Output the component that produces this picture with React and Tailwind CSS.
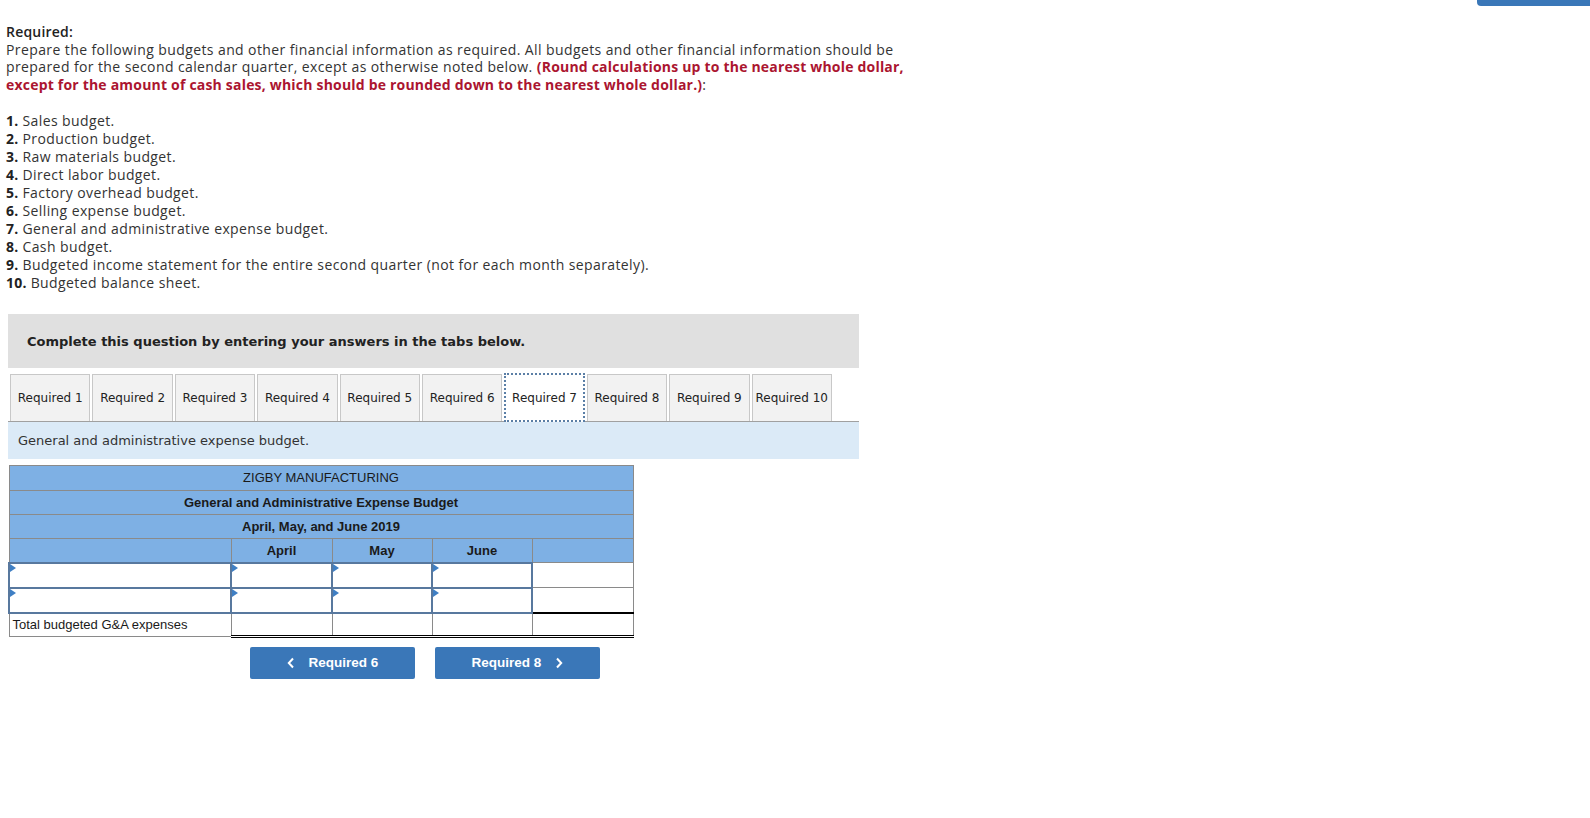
import React from "react";

const tabs = Array.from({ length: 10 }, (_, i) => `Required ${i + 1}`);
const items = [
  "Sales budget.",
  "Production budget.",
  "Raw materials budget.",
  "Direct labor budget.",
  "Factory overhead budget.",
  "Selling expense budget.",
  "General and administrative expense budget.",
  "Cash budget.",
  "Budgeted income statement for the entire second quarter (not for each month separately).",
  "Budgeted balance sheet.",
];

function Tri() {
  return (
    <span className="absolute left-0 top-0 w-0 h-0 border-t-[4px] border-b-[4px] border-l-[6px] border-t-transparent border-b-transparent border-l-[#3f7fc4]" />
  );
}

function InputCell({ w }) {
  return (
    <td className={`relative ${w} h-[25px] p-0 bg-white border-2 border-[#58789e]`}>
      <Tri />
    </td>
  );
}

function TotalCell() {
  return (
    <td
      className="border-x border-[#8a8a8a] border-t-2 border-t-black border-b-[3px] border-b-black p-0"
      style={{ borderBottomStyle: "double" }}
    />
  );
}

export default function App() {
  const body = { fontFamily: "'Open Sans', Lato, sans-serif" };
  const verdana = { fontFamily: "'DejaVu Sans', Verdana, sans-serif" };
  const arial = { fontFamily: "'Liberation Sans', Arial, sans-serif" };
  return (
    <div className="relative min-h-[818px] bg-white text-[#333]">
      <div className="absolute right-0 top-0 w-[113px] h-[6px] bg-[#3a77b8] rounded-bl-[4px]" />

      <div className="pt-[23px] pl-[6px] text-[14px] leading-[17.5px] tracking-[0.4px]" style={body}>
        <div className="font-semibold text-[#222] tracking-[0.2px]">Required:</div>
        <div>
          Prepare the following budgets and other financial information as required. All budgets and other financial information should be
          <br />
          prepared for the second calendar quarter, except as otherwise noted below.{" "}
          <span className="font-bold text-[#ab1530] tracking-[0.2px]">
            (Round calculations up to the nearest whole dollar,
            <br />
            except for the amount of cash sales, which should be rounded down to the nearest whole dollar.)
          </span>
          :
        </div>
        <div className="mt-[19px] leading-[18px]">
          {items.map((t, i) => (
            <div key={i}>
              <span className="font-bold text-[#222] tracking-[0.2px]">{i + 1}.</span> {t}
            </div>
          ))}
        </div>
      </div>

      <div className="ml-[8px] w-[851px] mt-[22px]">
        <div className="h-[54px] bg-[#e0e0e0] flex items-center pl-[19px] pt-[2px]">
          <span className="font-bold text-[13px] text-[#222]" style={verdana}>
            Complete this question by entering your answers in the tabs below.
          </span>
        </div>
        <div className="mt-[7px] flex gap-[2px] pl-[2px] border-b border-[#a0a0a0] h-[47px] items-end">
          {tabs.map((t, i) =>
            i === 6 ? (
              <div
                key={t}
                className="w-[80.4px] h-[49px] bg-white border-2 border-dotted border-[#5b7fa6] flex items-center justify-center text-[12px] text-[#222] mb-[-1px]"
                style={verdana}
              >
                {t}
              </div>
            ) : (
              <div
                key={t}
                className="w-[80.4px] h-[47px] bg-[#f2f2f2] border border-b-0 border-[#c8c8c8] flex items-center justify-center text-[12px] text-[#222]"
                style={verdana}
              >
                {t}
              </div>
            )
          )}
        </div>
        <div className="h-[37px] bg-[#dbeaf7] flex items-center pl-[10px] text-[13px] text-[#333]" style={verdana}>
          General and administrative expense budget.
        </div>
      </div>

      <div className="ml-[8px] mt-[6px]" style={arial}>
        <table className="border-collapse text-[13px] text-[#1a1a1a]">
          <tbody>
            <tr className="bg-[#7eb0e4]">
              <td colSpan={5} className="h-[25px] border border-[#8a8a8a] text-center p-0 w-[624px]">
                ZIGBY MANUFACTURING
              </td>
            </tr>
            <tr className="bg-[#7eb0e4]">
              <td colSpan={5} className="h-[24px] border border-[#8a8a8a] text-center p-0 font-bold">
                General and Administrative Expense Budget
              </td>
            </tr>
            <tr className="bg-[#7eb0e4]">
              <td colSpan={5} className="h-[24px] border border-[#8a8a8a] text-center p-0 font-bold">
                April, May, and June 2019
              </td>
            </tr>
            <tr className="bg-[#7eb0e4] font-bold">
              <td className="w-[222px] h-[24px] border border-[#8a8a8a] p-0" />
              <td className="w-[101px] border border-[#8a8a8a] text-center p-0">April</td>
              <td className="w-[100px] border border-[#8a8a8a] text-center p-0">May</td>
              <td className="w-[100px] border border-[#8a8a8a] text-center p-0">June</td>
              <td className="w-[101px] border border-[#8a8a8a] p-0" />
            </tr>
            {[0, 1].map((r) => (
              <tr key={r}>
                <InputCell w="w-[222px]" />
                <InputCell w="w-[101px]" />
                <InputCell w="w-[100px]" />
                <InputCell w="w-[100px]" />
                <td className="w-[101px] h-[25px] border border-[#8a8a8a] p-0 bg-white" />
              </tr>
            ))}
            <tr>
              <td className="h-[24px] border border-[#8a8a8a] pl-[3px] p-0 text-left">Total budgeted G&amp;A expenses</td>
              <TotalCell />
              <TotalCell />
              <TotalCell />
              <TotalCell />
            </tr>
          </tbody>
        </table>
      </div>

      <div className="ml-[250px] mt-[9px] flex gap-[20px]" style={arial}>
        <button className="w-[165px] h-[32px] bg-[#3a77b8] rounded-[2px] text-white font-bold text-[13.5px] flex items-center justify-center gap-[14px]">
          <svg width="8" height="12" viewBox="0 0 8 12"><path d="M6 1.5 L1.8 6 L6 10.5" stroke="white" strokeWidth="2" fill="none" /></svg>
          <span>Required 6</span>
        </button>
        <button className="w-[165px] h-[32px] bg-[#3a77b8] rounded-[2px] text-white font-bold text-[13.5px] flex items-center justify-center gap-[14px]">
          <span>Required 8</span>
          <svg width="8" height="12" viewBox="0 0 8 12"><path d="M2 1.5 L6.2 6 L2 10.5" stroke="white" strokeWidth="2" fill="none" /></svg>
        </button>
      </div>
    </div>
  );
}
